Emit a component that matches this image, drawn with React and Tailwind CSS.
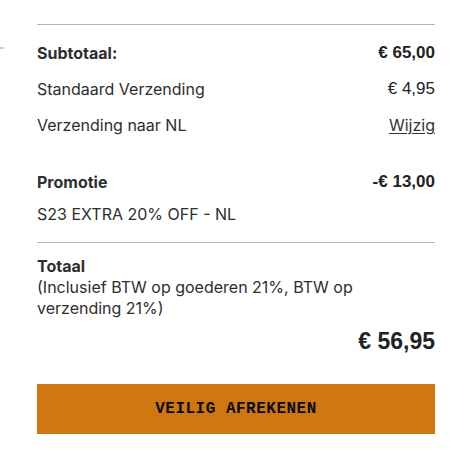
import React from 'react'

const sans = { fontFamily: 'Inter, "Noto Sans", sans-serif' }

const Row = ({ label, value, bold, link }) => (
    <div className="h-[36px] flex items-center justify-between">
        <span className={bold ? 'font-bold' : ''}>{label}</span>
        {link ? (
            <a className="underline underline-offset-2 text-[#333]" style={sans}>{value}</a>
        ) : (
            <span className={`font-['Liberation_Sans',Arial,sans-serif] text-[17px] text-[#222] ${bold ? 'font-bold' : 'font-normal'}`}>{value}</span>
        )}
    </div>
)

export default function App() {
    return (
        <div className="relative w-[475px] h-[451px] bg-white text-[16px] text-[#2e2e2e] overflow-hidden" style={sans}>
            <div className="absolute left-0 top-[47px] w-[4px] h-[2px] bg-[#cfcfcf]" />
            <div className="ml-[37px] w-[398px] pt-[24px]">
                <div className="border-t border-[#b5b5b5] pt-[10px]">
                    <Row label="Subtotaal:" value="€ 65,00" bold />
                    <Row label="Standaard Verzending" value="€ 4,95" />
                    <Row label="Verzending naar NL" value="Wijzig" link />
                </div>

                <div className="mt-[23px]">
                    <div className="h-[32px] flex items-center justify-between">
                        <span className="font-bold">Promotie</span>
                        <span className="font-['Liberation_Sans',Arial,sans-serif] font-bold text-[17px] text-[#222]">-€ 13,00</span>
                    </div>
                    <div className="h-[32px] flex items-center">S23 EXTRA 20% OFF - NL</div>
                </div>

                <div className="mt-[12px] border-t border-[#b5b5b5] pt-[13px] leading-[21px]">
                    <div className="font-bold">Totaal</div>
                    <div className="w-[340px]">(Inclusief BTW op goederen 21%, BTW op verzending 21%)</div>
                    <div className="mt-[8px] flex justify-end">
                        <span className="font-['Liberation_Sans',Arial,sans-serif] font-bold text-[23px] leading-[28px] text-[#222]">€ 56,95</span>
                    </div>
                </div>

                <button className="mt-[29px] w-full h-[50px] bg-[#cf7811] flex items-center justify-center font-['Liberation_Mono',monospace] font-bold text-[16px] tracking-[0.5px] text-[#0a0a0a]">
                    VEILIG AFREKENEN
                </button>
            </div>
        </div>
    )
}
